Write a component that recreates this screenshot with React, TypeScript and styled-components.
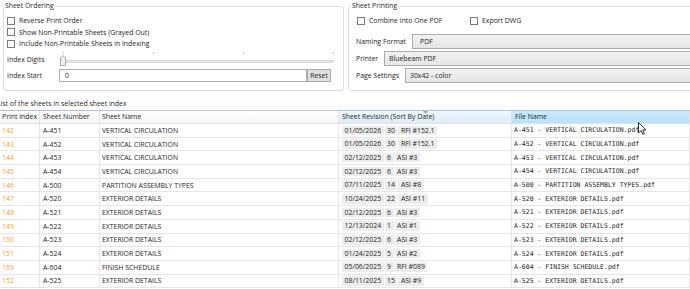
import React from 'react';
import styled, { createGlobalStyle } from 'styled-components';

const Global = createGlobalStyle`
  html, body {
    margin: 0;
    padding: 0;
    background: #fff;
  }
  body {
    font-family: "Open Sans", "Noto Sans", sans-serif;
    font-size: 6.9px;
    color: #1e1e1e;
  }
`;

type Sheet = {
  idx: string;
  num: string;
  name: string;
  date: string;
  rev: string;
  desc: string;
};

const sheets: Sheet[] = [
  ['142', 'A-451', 'VERTICAL CIRCULATION', '01/05/2026', '30', 'RFI #152.1'],
  ['143', 'A-452', 'VERTICAL CIRCULATION', '01/05/2026', '30', 'RFI #152.1'],
  ['144', 'A-453', 'VERTICAL CIRCULATION', '02/12/2025', '6', 'ASI #3'],
  ['145', 'A-454', 'VERTICAL CIRCULATION', '02/12/2025', '6', 'ASI #3'],
  ['146', 'A-500', 'PARTITION ASSEMBLY TYPES', '07/11/2025', '14', 'ASI #8'],
  ['147', 'A-520', 'EXTERIOR DETAILS', '10/24/2025', '22', 'ASI #11'],
  ['148', 'A-521', 'EXTERIOR DETAILS', '02/12/2025', '6', 'ASI #3'],
  ['149', 'A-522', 'EXTERIOR DETAILS', '12/13/2024', '1', 'ASI #1'],
  ['150', 'A-523', 'EXTERIOR DETAILS', '02/12/2025', '6', 'ASI #3'],
  ['151', 'A-524', 'EXTERIOR DETAILS', '01/24/2025', '5', 'ASI #2'],
  ['169', 'A-604', 'FINISH SCHEDULE', '05/06/2025', '9', 'RFI #089'],
  ['152', 'A-525', 'EXTERIOR DETAILS', '08/11/2025', '15', 'ASI #9'],
].map(([idx, num, name, date, rev, desc]) => ({ idx, num, name, date, rev, desc }));

const columns = '40px 60px 239px 173px 1fr';

const Screen = styled.div`
  position: relative;
  width: 690px;
  height: 289px;
  overflow: hidden;
  display: flex;
  flex-direction: column;
`;

const TopRow = styled.div`
  display: grid;
  grid-template-columns: 341px 400px;
  column-gap: 4px;
  height: 97px;
  padding: 1px 0 0 3px;
  box-sizing: border-box;
`;

const Group = styled.fieldset<{ $pl: number }>`
  margin: 0;
  min-width: 0;
  height: 90px;
  box-sizing: border-box;
  padding: 0 9px 0 ${({ $pl }) => $pl}px;
  border: 1px solid #d5dfe5;
  border-radius: 3px;
`;

const Legend = styled.legend<{ $ml: number }>`
  margin-left: ${({ $ml }) => $ml}px;
  padding: 0 1px;
  line-height: 10px;
`;

const GroupBody = styled.div`
  display: flex;
  flex-direction: column;
  padding-top: 4px;
`;

const CheckLine = styled.div`
  display: flex;
`;

const CheckRow = styled.label<{ $w?: number }>`
  display: flex;
  align-items: center;
  gap: 4px;
  height: 11.5px;
  white-space: nowrap;
  width: ${({ $w }) => ($w ? `${$w}px` : 'auto')};
`;

const Box = styled.span`
  flex: none;
  width: 8px;
  height: 8px;
  box-sizing: border-box;
  border: 1px solid #7a7a7a;
  background: #fff;
`;

const FieldGrid = styled.div`
  display: grid;
  grid-template-columns: 52px 1fr;
  grid-template-rows: 14px 13px;
  row-gap: 3px;
  align-items: center;
  margin-top: 2.5px;
`;

const FieldLabel = styled.span`
  white-space: nowrap;
`;

const Slider = styled.div`
  position: relative;
  height: 14px;
  margin-left: 1px;
`;

const Ticks = styled.div`
  display: flex;
  justify-content: space-between;
  padding-left: 3px;
  height: 2px;

  span {
    width: 1px;
    height: 2px;
    background: #c8c8c8;
  }
`;

const Track = styled.div`
  margin-top: 6px;
  height: 3px;
  box-sizing: border-box;
  border: 1px solid #d6d6d6;
  background: #e7eaea;
  border-radius: 1px;
`;

const Thumb = styled.svg`
  position: absolute;
  left: 0;
  top: 3px;
`;

const TextRow = styled.div`
  display: flex;
  height: 13px;
  margin-right: 3px;
`;

const TextBox = styled.div`
  flex: 1;
  box-sizing: border-box;
  border: 1px solid #abadb3;
  padding-left: 5px;
  line-height: 11px;
  background: #fff;
`;

const ResetButton = styled.button`
  flex: none;
  width: 24px;
  height: 13px;
  padding: 0;
  box-sizing: border-box;
  border: 1px solid #adadad;
  background: #e1e1e1;
  font: inherit;
  color: #1e1e1e;
  line-height: 11px;
`;

const ComboList = styled.div`
  display: flex;
  flex-direction: column;
  gap: 2px;
  margin: 7.25px 0 0 -1px;
`;

const ComboRow = styled.div`
  display: flex;
  align-items: center;
  gap: 6px;
  height: 15px;
  white-space: nowrap;
`;

const Combo = styled.div<{ $pad: number }>`
  flex: 1;
  height: 15px;
  box-sizing: border-box;
  display: flex;
  align-items: center;
  padding-left: ${({ $pad }) => $pad}px;
  border: 1px solid #acacac;
  background: linear-gradient(#f2f2f2, #e5e5e5);
`;

const Caption = styled.div`
  height: 13px;
  line-height: 13px;
  text-indent: -3px;
  white-space: nowrap;
`;

const Table = styled.div`
  flex: 1;
  display: flex;
  flex-direction: column;
  border-top: 1px solid #b6c3cf;
`;

const HeaderRow = styled.div`
  display: grid;
  grid-template-columns: ${columns};
  height: 13px;
`;

const headBg = {
  plain: 'linear-gradient(#ffffff, #f4f5f6)',
  sorted: 'linear-gradient(#eef7fd, #dcedf9)',
  hover: 'linear-gradient(#c9eafc, #b9e2f9)',
};

const HeadCell = styled.div<{ $state?: keyof typeof headBg }>`
  position: relative;
  padding-left: ${({ $state }) => ($state ? 3 : 2)}px;
  line-height: 12px;
  white-space: nowrap;
  box-sizing: border-box;
  border-right: 1px solid #dde3e8;
  border-bottom: 1px solid #dde3e8;
  background: ${({ $state }) => headBg[$state ?? 'plain']};
  &:nth-child(2) {
    padding-left: 3px;
  }
`;

const SortArrow = styled.svg`
  position: absolute;
  left: 84px;
  top: 0;
`;

const BodyRow = styled.div`
  display: grid;
  grid-template-columns: ${columns};
  height: 13.7px;
  box-sizing: border-box;
  border-bottom: 1px solid #e6e6e6;
`;

const Cell = styled.div<{ $mono?: boolean; $accent?: boolean; $pl?: number }>`
  display: flex;
  align-items: center;
  padding-left: ${({ $pl }) => $pl ?? 2}px;
  border-right: 1px solid #e6e6e6;
  white-space: nowrap;
  overflow: hidden;
  color: ${({ $accent }) => ($accent ? '#f0a030' : '#1e1e1e')};
  font-family: ${({ $mono }) =>
    $mono ? '"DejaVu Sans Mono", "Liberation Mono", monospace' : 'inherit'};
  font-size: ${({ $mono }) => ($mono ? '6.5px' : 'inherit')};
`;

const RevParts = styled.div`
  display: flex;
  gap: 1px;
`;

const RevPart = styled.span`
  height: 9.5px;
  line-height: 9.5px;
  padding: 0 2.5px;
  background: #ececec;
`;

const Cursor = styled.svg`
  position: absolute;
  left: 638px;
  top: 122px;
`;

function Check({ label, width }: { label: string; width?: number }) {
  return (
    <CheckRow $w={width}>
      <Box />
      {label}
    </CheckRow>
  );
}

export default function App() {
  return (
    <>
      <Global />
      <Screen>
        <TopRow>
          <Group $pl={3}>
            <Legend $ml={-3}>Sheet Ordering</Legend>
            <GroupBody>
              <Check label="Reverse Print Order" />
              <Check label="Show Non-Printable Sheets (Grayed Out)" />
              <Check label="Include Non-Printable Sheets in Indexing" />
              <FieldGrid>
                <FieldLabel>Index Digits</FieldLabel>
                <Slider>
                  <Ticks>
                    <span />
                    <span />
                    <span />
                    <span />
                  </Ticks>
                  <Track />
                  <Thumb width="6" height="11" viewBox="0 0 6 11">
                    <path
                      d="M0.5 10.5 V3 L3 0.5 L5.5 3 V10.5 Z"
                      fill="#f0f0f0"
                      stroke="#a8a8a8"
                      strokeWidth="1"
                    />
                  </Thumb>
                </Slider>
                <FieldLabel>Index Start</FieldLabel>
                <TextRow>
                  <TextBox>0</TextBox>
                  <ResetButton>Reset</ResetButton>
                </TextRow>
              </FieldGrid>
            </GroupBody>
          </Group>

          <Group $pl={8}>
            <Legend $ml={-6}>Sheet Printing</Legend>
            <GroupBody>
              <CheckLine>
                <Check label="Combine Into One PDF" width={113} />
                <Check label="Export DWG" />
              </CheckLine>
              <ComboList>
                <ComboRow>
                  Naming Format
                  <Combo $pad={7}>PDF</Combo>
                </ComboRow>
                <ComboRow>
                  Printer
                  <Combo $pad={4}>Bluebeam PDF</Combo>
                </ComboRow>
                <ComboRow>
                  Page Settings
                  <Combo $pad={4}>30x42 - color</Combo>
                </ComboRow>
              </ComboList>
            </GroupBody>
          </Group>
        </TopRow>

        <Caption>List of the sheets in selected sheet index</Caption>

        <Table>
          <HeaderRow>
            <HeadCell>Print Index</HeadCell>
            <HeadCell>Sheet Number</HeadCell>
            <HeadCell>Sheet Name</HeadCell>
            <HeadCell $state="sorted">
              Sheet Revision (Sort By Date)
              <SortArrow width="5" height="3" viewBox="0 0 5 3">
                <path d="M0 0 H5 L2.5 3 Z" fill="#9aa8b5" />
              </SortArrow>
            </HeadCell>
            <HeadCell $state="hover">File Name</HeadCell>
          </HeaderRow>
          {sheets.map((s) => (
            <BodyRow key={s.idx}>
              <Cell $accent>{s.idx}</Cell>
              <Cell $pl={3}>{s.num}</Cell>
              <Cell>{s.name}</Cell>
              <Cell $pl={3}>
                <RevParts>
                  <RevPart>{s.date}</RevPart>
                  <RevPart>{s.rev}</RevPart>
                  <RevPart>{s.desc}</RevPart>
                </RevParts>
              </Cell>
              <Cell $mono>{`${s.num} - ${s.name}.pdf`}</Cell>
            </BodyRow>
          ))}
        </Table>

        <Cursor width="9" height="13" viewBox="0 0 9 13">
          <path
            d="M0.5 0.5 V11 L3 8.6 L4.8 12.4 L6.4 11.7 L4.7 8 H7.9 Z"
            fill="#fff"
            stroke="#000"
            strokeWidth="0.8"
            strokeLinejoin="round"
          />
        </Cursor>
      </Screen>
    </>
  );
}
